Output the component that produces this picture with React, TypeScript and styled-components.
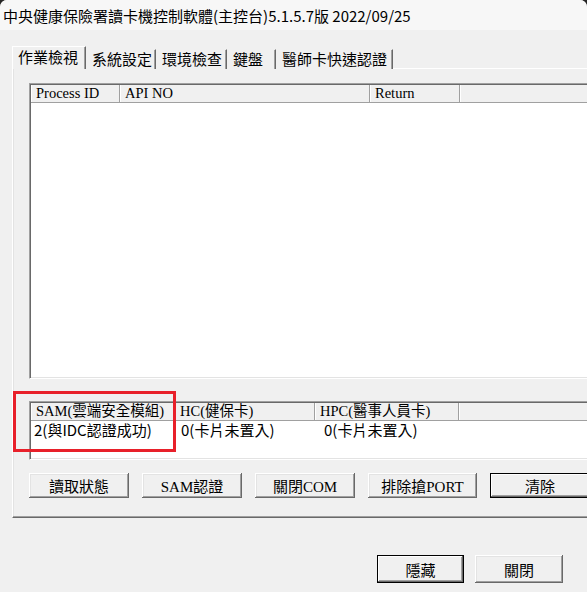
import React from 'react';
import styled, { createGlobalStyle } from 'styled-components';

const Global = createGlobalStyle`
  html, body { margin: 0; padding: 0; background: #262626; }
  #root { width: 587px; height: 592px; }
`;

const Window = styled.div`
  position: relative;
  width: 587px;
  height: 592px;
  overflow: hidden;
  background: #f0f0f0;
  border-radius: 7px 7px 0 0;
  display: flex;
  flex-direction: column;
  font-family: "Noto Sans CJK TC", "Noto Sans", sans-serif;
  color: #000;
`;

const TitleBar = styled.div`
  flex: none;
  height: 30px;
  background: #f7f7f7;
  display: flex;
  align-items: center;
  padding-left: 3px;
  font-size: 15px;
  white-space: nowrap;
`;

const Body = styled.div`
  flex: 1;
  display: flex;
  flex-direction: column;
  padding: 16px 0 0 12px;
`;

const TabStrip = styled.div`
  display: flex;
  align-items: flex-end;
  height: 23px;
  margin-bottom: -1px;
  position: relative;
  z-index: 1;
`;

const Tab = styled.div<{ $w: number; $active?: boolean }>`
  box-sizing: border-box;
  width: ${p => p.$w}px;
  height: ${p => (p.$active ? 23 : 20)}px;
  display: flex;
  align-items: center;
  padding: 0 0 ${p => (p.$active ? 4 : 3)}px 5px;
  background: #f0f0f0;
  border-top: 1px solid #fff;
  border-left: 1px solid #fff;
  border-right: 1px solid #696969;
  box-shadow: inset -1px 0 #a0a0a0;
  font-size: 15px;
  white-space: nowrap;
  ${p => (p.$active ? '' : 'border-left-color: #f0f0f0; border-top-color: #f0f0f0;')}
`;

const Panel = styled.div`
  box-sizing: border-box;
  flex: none;
  width: 620px;
  height: 450px;
  border-top: 1px solid #fff;
  border-left: 1px solid #fff;
  border-bottom: 1px solid #696969;
  box-shadow: inset 0 -1px #a0a0a0, inset 1px 0 #e3e3e3;
  padding: 14px 0 0 16px;
  display: flex;
  flex-direction: column;
`;

const ListBox = styled.div<{ $h: number }>`
  box-sizing: border-box;
  height: ${p => p.$h}px;
  width: 590px;
  background: #fff;
  border-top: 1px solid #a0a0a0;
  border-left: 1px solid #a0a0a0;
  border-bottom: 1px solid #fff;
  box-shadow: inset 1px 1px #696969, inset 0 -1px #e3e3e3;
  padding: 1px 0 0 1px;
  display: flex;
  flex-direction: column;
`;

const HeaderRow = styled.div`
  display: flex;
  height: 17px;
  background: #f0f0f0;
  border-bottom: 1px solid #a0a0a0;
`;

const HeaderCell = styled.div<{ $w?: number }>`
  box-sizing: border-box;
  ${p => (p.$w ? `width: ${p.$w}px; flex: none;` : 'flex: 1;')}
  height: 17px;
  line-height: 17px;
  padding-left: 5px;
  border-right: 1px solid #a0a0a0;
  box-shadow: inset 1px 0 #fff;
  font-family: "Liberation Serif", "Noto Sans CJK TC", serif;
  font-size: 14.5px;
  white-space: nowrap;
  overflow: hidden;
`;

const DataRow = styled.div`
  display: flex;
  height: 17px;
  margin-top: 1px;
`;

const DataCell = styled.div<{ $w: number }>`
  width: ${p => p.$w}px;
  flex: none;
  padding-left: 3px;
  font-size: 15px;
  line-height: 16px;
  white-space: nowrap;
`;

const Gap = styled.div<{ $h: number }>`
  height: ${p => p.$h}px;
  flex: none;
`;

const ButtonRow = styled.div`
  display: flex;
  gap: 13px;
  margin-top: 13px;
`;

const Btn = styled.button<{ $w: number; $h: number; $default?: boolean }>`
  box-sizing: border-box;
  flex: none;
  width: ${p => p.$w}px;
  height: ${p => p.$h}px;
  padding: 0;
  border: none;
  background: #f0f0f0;
  color: #000;
  font-family: "Liberation Serif", "Noto Sans CJK TC", serif;
  font-size: 15px;
  white-space: nowrap;
  box-shadow: ${p =>
    p.$default
      ? 'inset 0 0 0 1px #000, inset -2px -2px #696969, inset 2px 2px #fff, inset -3px -3px #a0a0a0'
      : 'inset -1px -1px #696969, inset 1px 1px #fff, inset -2px -2px #a0a0a0, inset 2px 2px #e3e3e3'};
`;

const Footer = styled.div`
  display: flex;
  justify-content: flex-end;
  gap: 11px;
  margin-top: 37px;
  padding-right: 24px;
`;

const Highlight = styled.div`
  position: absolute;
  left: 13px;
  top: 391px;
  width: 163px;
  height: 61px;
  box-sizing: border-box;
  border: 3px solid #e8202a;
  pointer-events: none;
`;

const tabs = [
  { label: '作業檢視', w: 74, active: true },
  { label: '系統設定', w: 70 },
  { label: '環境檢查', w: 71 },
  { label: '鍵盤', w: 49 },
  { label: '醫師卡快速認證', w: 117 },
];

const cols1 = [
  { label: 'Process ID', w: 89 },
  { label: 'API NO', w: 250 },
  { label: 'Return', w: 90 },
];

const cols2 = [
  { label: 'SAM(雲端安全模組)', w: 144, value: '2(與IDC認證成功)' },
  { label: 'HC(健保卡)', w: 140, value: '0(卡片未置入)' },
  { label: 'HPC(醫事人員卡)', w: 144, value: '0(卡片未置入)' },
];

const buttons = [
  { label: '讀取狀態', w: 100 },
  { label: 'SAM認證', w: 100 },
  { label: '關閉COM', w: 100 },
  { label: '排除搶PORT', w: 109 },
  { label: '清除', w: 100, def: true },
];

export default function App() {
  return (
    <>
      <Global />
      <Window>
        <TitleBar>中央健康保險署讀卡機控制軟體(主控台)5.1.5.7版 2022/09/25</TitleBar>
        <Body>
          <TabStrip>
            {tabs.map(t => (
              <Tab key={t.label} $w={t.w} $active={t.active}>
                {t.label}
              </Tab>
            ))}
          </TabStrip>
          <Panel>
            <ListBox $h={296}>
              <HeaderRow>
                {cols1.map(c => (
                  <HeaderCell key={c.label} $w={c.w}>
                    {c.label}
                  </HeaderCell>
                ))}
                <HeaderCell />
              </HeaderRow>
            </ListBox>
            <Gap $h={22} />
            <ListBox $h={59}>
              <HeaderRow>
                {cols2.map(c => (
                  <HeaderCell key={c.label} $w={c.w}>
                    {c.label}
                  </HeaderCell>
                ))}
                <HeaderCell />
              </HeaderRow>
              <DataRow>
                {cols2.map(c => (
                  <DataCell key={c.label} $w={c.w}>
                    {c.value}
                  </DataCell>
                ))}
              </DataRow>
            </ListBox>
            <ButtonRow>
              {buttons.map(b => (
                <Btn key={b.label} $w={b.w} $h={25} $default={b.def}>
                  {b.label}
                </Btn>
              ))}
            </ButtonRow>
          </Panel>
          <Footer>
            <Btn $w={87} $h={28} $default>
              隱藏
            </Btn>
            <Btn $w={88} $h={28}>
              關閉
            </Btn>
          </Footer>
        </Body>
        <Highlight />
      </Window>
    </>
  );
}
